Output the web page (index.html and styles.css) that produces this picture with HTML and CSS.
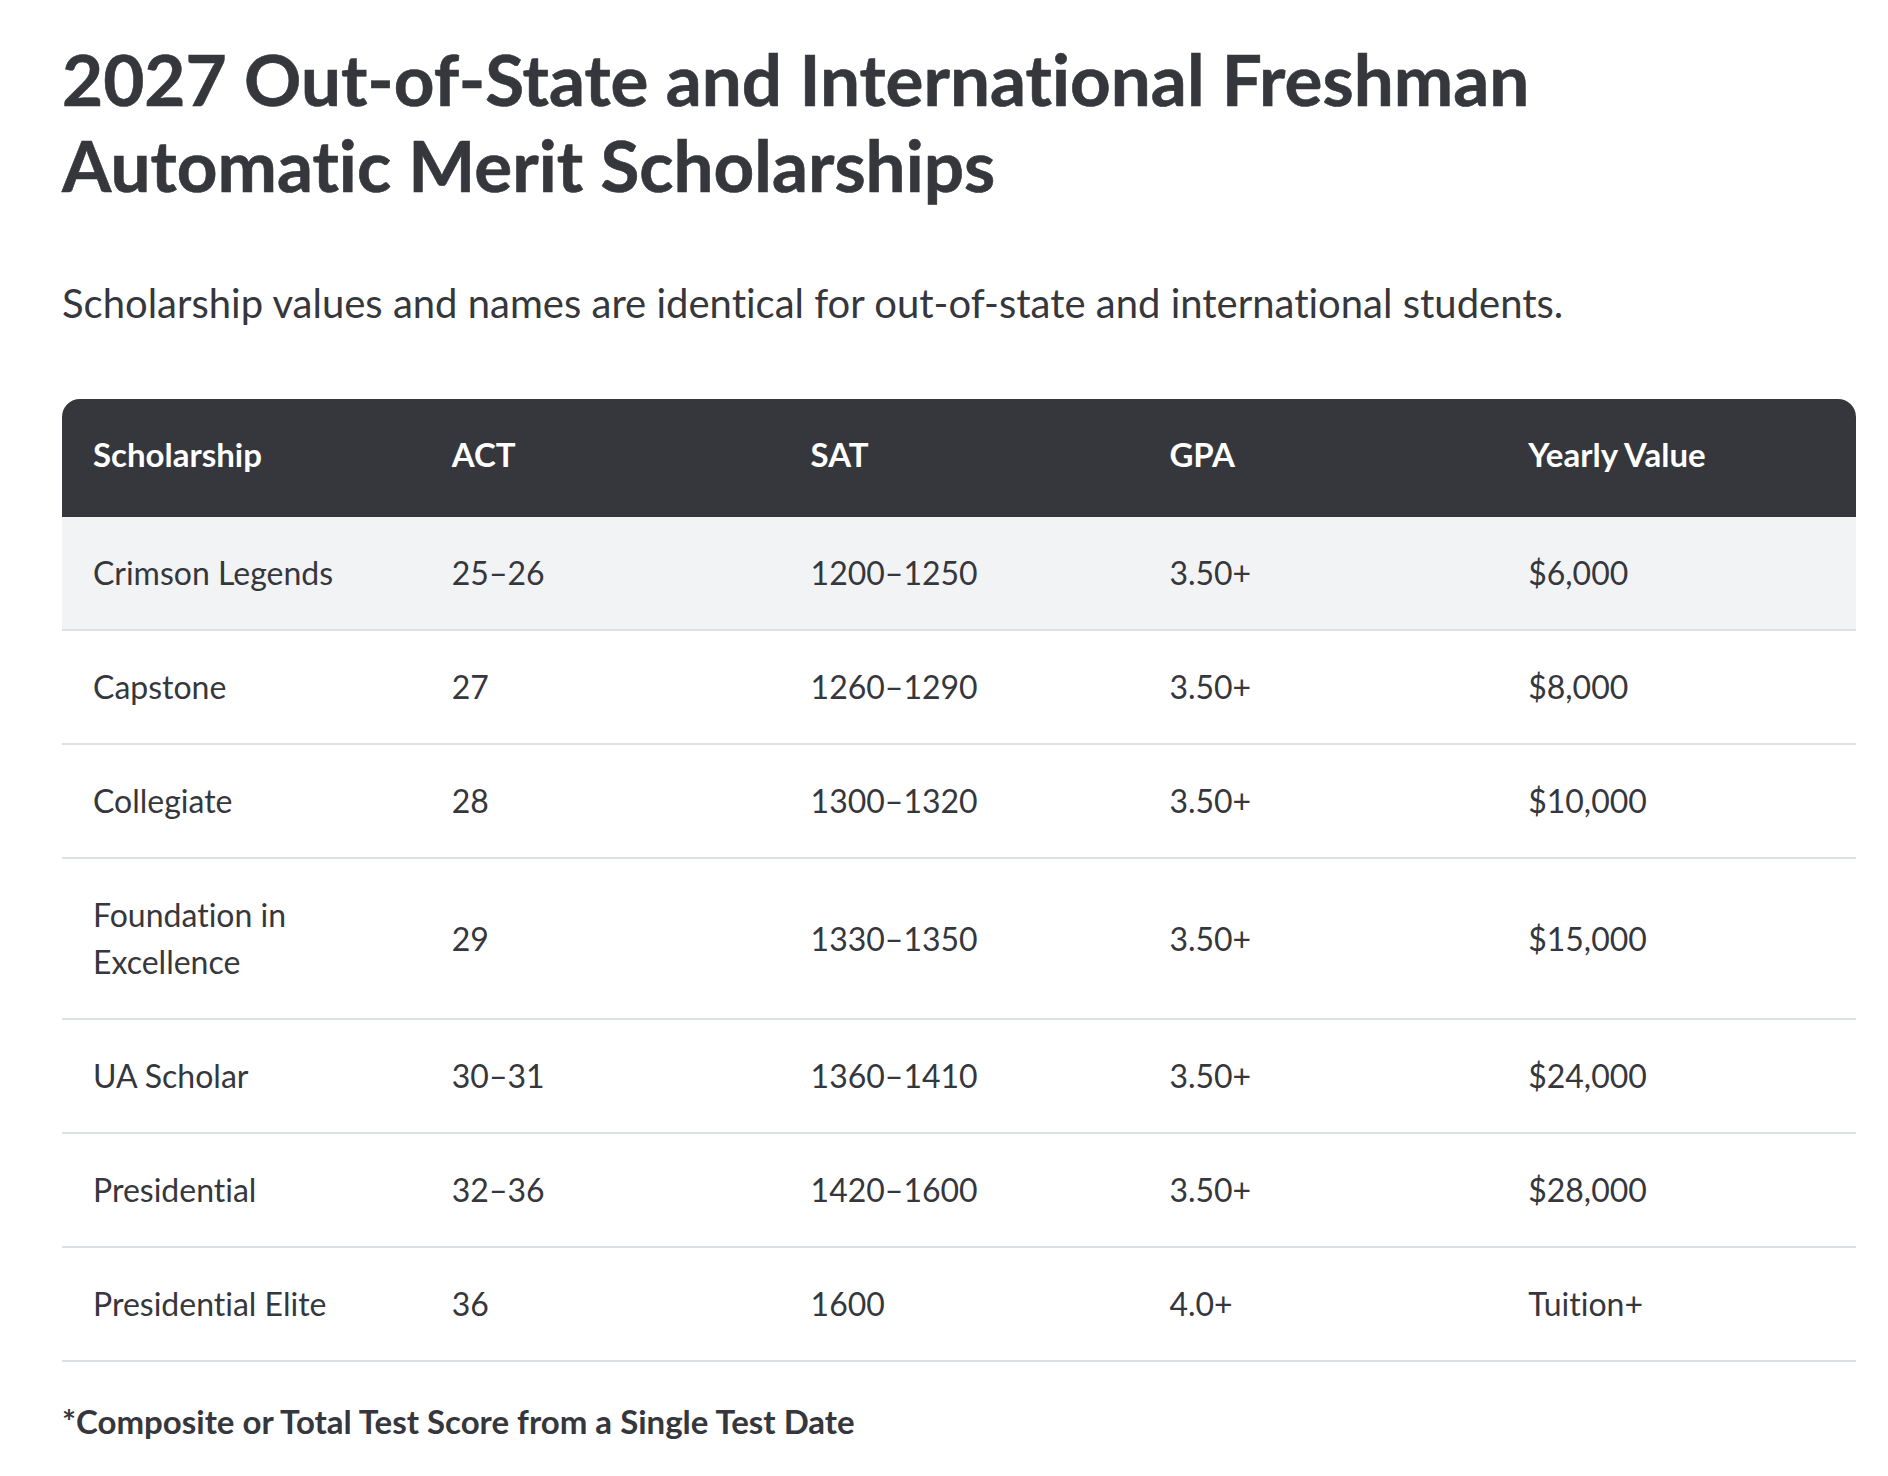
FILE: index.html
```html
<!DOCTYPE html>
<html lang="en">
<head>
<meta charset="utf-8">
<title>2027 Out-of-State and International Freshman Automatic Merit Scholarships</title>
<link rel="stylesheet" href="styles.css">
</head>
<body>
<main class="page">
  <h1 class="title">2027 Out-of-State and International Freshman Automatic Merit Scholarships</h1>
  <p class="lead">Scholarship values and names are identical for out-of-state and international students.</p>
  <table class="sch-table">
    <thead>
      <tr>
        <th>Scholarship</th>
        <th>ACT</th>
        <th>SAT</th>
        <th>GPA</th>
        <th>Yearly Value</th>
      </tr>
    </thead>
    <tbody>
      <tr class="is-shaded">
        <td>Crimson Legends</td><td>25–26</td><td>1200–1250</td><td>3.50+</td><td>$6,000</td>
      </tr>
      <tr>
        <td>Capstone</td><td>27</td><td>1260–1290</td><td>3.50+</td><td>$8,000</td>
      </tr>
      <tr>
        <td>Collegiate</td><td>28</td><td>1300–1320</td><td>3.50+</td><td>$10,000</td>
      </tr>
      <tr>
        <td>Foundation in Excellence</td><td>29</td><td>1330–1350</td><td>3.50+</td><td>$15,000</td>
      </tr>
      <tr>
        <td>UA Scholar</td><td>30–31</td><td>1360–1410</td><td>3.50+</td><td>$24,000</td>
      </tr>
      <tr>
        <td>Presidential</td><td>32–36</td><td>1420–1600</td><td>3.50+</td><td>$28,000</td>
      </tr>
      <tr>
        <td>Presidential Elite</td><td>36</td><td>1600</td><td>4.0+</td><td>Tuition+</td>
      </tr>
    </tbody>
  </table>
  <p class="note">*Composite or Total Test Score from a Single Test Date</p>
</main>
</body>
</html>
```
FILE: styles.css
```css
html, body {
  margin: 0;
  padding: 0;
  background: #ffffff;
}

body {
  font-family: "Lato", "Open Sans", sans-serif;
  color: #36373c;
  font-variant-ligatures: none;
}

.page {
  width: 1794px;
  margin-left: 62px;
  padding-top: 36px;
}

.title {
  margin: 0;
  max-width: 1560px;
  font-size: 71px;
  line-height: 86px;
  font-weight: 700;
  color: #36373c;
  -webkit-text-stroke: 0.6px #36373c;
}

.lead {
  margin: 68px 0 0;
  font-size: 40px;
  line-height: 54px;
  font-weight: 400;
}

.sch-table {
  margin-top: 69px;
  width: 100%;
  border-collapse: separate;
  border-spacing: 0;
  table-layout: fixed;
  font-size: 32px;
  line-height: 47px;
}

.sch-table th {
  background: #36373c;
  color: #ffffff;
  font-size: 33px;
  font-weight: 700;
  text-align: left;
  padding: 32px 31px 39px;
}

.sch-table th:first-child {
  border-top-left-radius: 18px;
}

.sch-table th:last-child {
  border-top-right-radius: 18px;
}

.sch-table td {
  padding: 32px 31px 33px;
  border-bottom: 2px solid #dee1e4;
  vertical-align: middle;
}

.sch-table tr.is-shaded td {
  background: #f2f3f5;
}

.note {
  margin: 37px 0 0;
  font-size: 33px;
  line-height: 44px;
  font-weight: 700;
}
```
